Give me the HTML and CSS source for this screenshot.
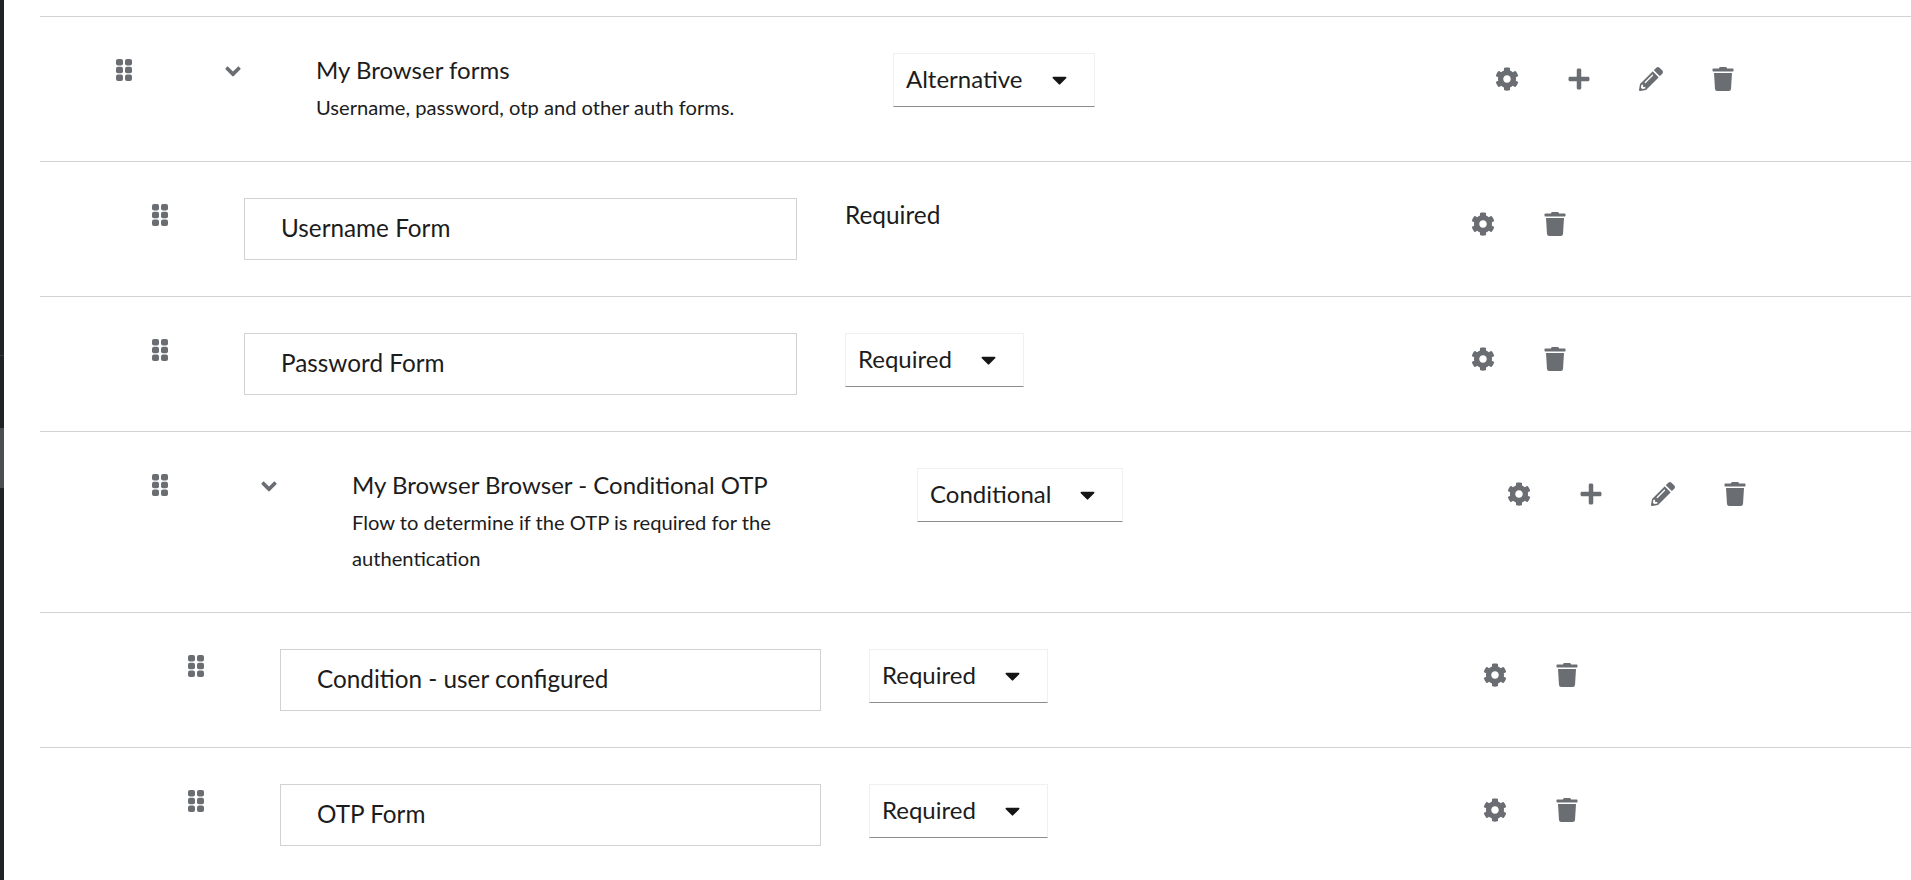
FILE: index.html
```html
<!DOCTYPE html>
<html lang="en">
<head>
    <meta charset="UTF-8">
    <title>My Browser forms</title>
    <link rel="stylesheet" href="styles.css">
</head>
<body>
<svg class="defs" aria-hidden="true">
    <symbol id="i-grip" viewBox="0 0 16 22">
        <rect x="0" y="0" width="7" height="6.4" rx="2"/><rect x="9" y="0" width="7" height="6.4" rx="2"/>
        <rect x="0" y="7.8" width="7" height="6.4" rx="2"/><rect x="9" y="7.8" width="7" height="6.4" rx="2"/>
        <rect x="0" y="15.6" width="7" height="6.4" rx="2"/><rect x="9" y="15.6" width="7" height="6.4" rx="2"/>
    </symbol>
    <symbol id="i-angle" viewBox="0 140 320 232">
        <path d="M143 352.3L7 216.3c-9.4-9.4-9.4-24.6 0-33.9l22.6-22.6c9.4-9.4 24.6-9.4 33.9 0l96.4 96.4 96.4-96.4c9.4-9.4 24.6-9.4 33.9 0l22.6 22.6c9.4 9.4 9.4 24.6 0 33.9l-136 136c-9.2 9.4-24.4 9.4-33.8 0z"/>
    </symbol>
    <symbol id="i-caret" viewBox="0 180 320 185">
        <path d="M31.3 192h257.3c17.8 0 26.7 21.5 14.1 34.1L174.1 354.8c-7.8 7.8-20.5 7.8-28.3 0L17.2 226.1C4.6 213.5 13.5 192 31.3 192z"/>
    </symbol>
    <symbol id="i-cog" viewBox="0 0 512 512">
        <path d="M487.4 315.7l-42.6-24.6c4.3-23.2 4.3-47 0-70.2l42.6-24.6c4.9-2.8 7.1-8.6 5.5-14-11.1-35.6-30-67.8-54.7-94.6-3.8-4.1-10-5.1-14.8-2.3L380.8 110c-17.9-15.4-38.5-27.3-60.8-35.1V25.8c0-5.6-3.9-10.5-9.4-11.7-36.7-8.2-74.3-7.8-109.2 0-5.5 1.2-9.4 6.1-9.4 11.7V75c-22.2 7.9-42.8 19.8-60.8 35.1L88.7 85.5c-4.9-2.8-11-1.9-14.8 2.3-24.7 26.7-43.6 58.9-54.7 94.6-1.7 5.4.6 11.2 5.5 14L67.3 221c-4.3 23.2-4.3 47 0 70.2l-42.6 24.6c-4.9 2.8-7.1 8.6-5.5 14 11.1 35.6 30 67.8 54.7 94.6 3.8 4.1 10 5.1 14.8 2.3l42.6-24.6c17.9 15.4 38.5 27.3 60.8 35.1v49.2c0 5.6 3.9 10.5 9.4 11.7 36.7 8.2 74.3 7.8 109.2 0 5.5-1.2 9.4-6.1 9.4-11.7v-49.2c22.2-7.9 42.8-19.8 60.8-35.1l42.6 24.6c4.9 2.8 11 1.9 14.8-2.3 24.7-26.7 43.6-58.9 54.7-94.6 1.5-5.5-.7-11.3-5.6-14.1zM256 336c-44.1 0-80-35.9-80-80s35.9-80 80-80 80 35.9 80 80-35.9 80-80 80z"/>
    </symbol>
    <symbol id="i-plus" viewBox="0 0 448 512">
        <path d="M416 208H272V64c0-17.67-14.33-32-32-32h-32c-17.67 0-32 14.33-32 32v144H32c-17.67 0-32 14.33-32 32v32c0 17.67 14.33 32 32 32h144v144c0 17.67 14.33 32 32 32h32c17.67 0 32-14.33 32-32V304h144c17.67 0 32-14.33 32-32v-32c0-17.67-14.33-32-32-32z"/>
    </symbol>
    <symbol id="i-pencil" viewBox="0 0 512 512">
        <path d="M497.9 142.1l-46.1 46.1c-4.7 4.7-12.3 4.7-17 0l-111-111c-4.7-4.7-4.7-12.3 0-17l46.1-46.1c18.7-18.7 49.1-18.7 67.9 0l60.1 60.1c18.8 18.7 18.8 49.1 0 67.9zM284.2 99.8L21.6 362.4.4 483.9c-2.9 16.4 11.4 30.6 27.8 27.8l121.5-21.3 262.6-262.6c4.7-4.7 4.7-12.3 0-17l-111-111c-4.8-4.7-12.4-4.7-17.1 0zM124.1 339.9c-5.5-5.5-5.5-14.3 0-19.8l154-154c5.5-5.5 14.3-5.5 19.8 0s5.5 14.3 0 19.8l-154 154c-5.5 5.5-14.3 5.5-19.8 0zM88 424h48v36.3l-64.5 11.3-31.1-31.1L51.7 376H88v48z"/>
    </symbol>
    <symbol id="i-trash" viewBox="0 0 448 512">
        <path d="M432 32H312l-9.4-18.7A24 24 0 0 0 281.1 0H166.8a23.72 23.72 0 0 0-21.4 13.3L136 32H16A16 16 0 0 0 0 48v32a16 16 0 0 0 16 16h416a16 16 0 0 0 16-16V48a16 16 0 0 0-16-16zM53.2 467a48 48 0 0 0 47.9 45h245.8a48 48 0 0 0 47.9-45L416 128H32z"/>
    </symbol>
</svg>

<div class="page">
    <div class="strip">
        <div class="strip-a"></div>
        <div class="strip-line"></div>
        <div class="strip-c"></div>
        <div class="strip-b"></div>
        <div class="strip-d"></div>
    </div>

    <div class="list">
        <div class="row flow depth0">
            <div class="grip"><svg class="ico-grip"><use href="#i-grip"/></svg></div>
            <div class="toggle"><svg class="ico-angle"><use href="#i-angle"/></svg></div>
            <div class="text">
                <h3>My Browser forms</h3>
                <p>Username, password, otp and other auth forms.</p>
            </div>
            <div class="mode">
                <div class="select"><span>Alternative</span><svg class="ico-caret"><use href="#i-caret"/></svg></div>
            </div>
            <div class="actions">
                <svg class="ico"><use href="#i-cog"/></svg>
                <svg class="ico"><use href="#i-plus"/></svg>
                <svg class="ico"><use href="#i-pencil"/></svg>
                <svg class="ico"><use href="#i-trash"/></svg>
            </div>
        </div>

        <div class="row step depth1">
            <div class="grip"><svg class="ico-grip"><use href="#i-grip"/></svg></div>
            <div class="name">Username Form</div>
            <div class="mode"><div class="plain">Required</div></div>
            <div class="actions">
                <svg class="ico"><use href="#i-cog"/></svg>
                <svg class="ico"><use href="#i-trash"/></svg>
            </div>
        </div>

        <div class="row step depth1">
            <div class="grip"><svg class="ico-grip"><use href="#i-grip"/></svg></div>
            <div class="name">Password Form</div>
            <div class="mode">
                <div class="select"><span>Required</span><svg class="ico-caret"><use href="#i-caret"/></svg></div>
            </div>
            <div class="actions">
                <svg class="ico"><use href="#i-cog"/></svg>
                <svg class="ico"><use href="#i-trash"/></svg>
            </div>
        </div>

        <div class="row flow depth1">
            <div class="grip"><svg class="ico-grip"><use href="#i-grip"/></svg></div>
            <div class="toggle"><svg class="ico-angle"><use href="#i-angle"/></svg></div>
            <div class="text">
                <h3>My Browser Browser - Conditional OTP</h3>
                <p>Flow to determine if the OTP is required for the authentication</p>
            </div>
            <div class="mode">
                <div class="select"><span>Conditional</span><svg class="ico-caret"><use href="#i-caret"/></svg></div>
            </div>
            <div class="actions">
                <svg class="ico"><use href="#i-cog"/></svg>
                <svg class="ico"><use href="#i-plus"/></svg>
                <svg class="ico"><use href="#i-pencil"/></svg>
                <svg class="ico"><use href="#i-trash"/></svg>
            </div>
        </div>

        <div class="row step depth2">
            <div class="grip"><svg class="ico-grip"><use href="#i-grip"/></svg></div>
            <div class="name">Condition - user configured</div>
            <div class="mode">
                <div class="select"><span>Required</span><svg class="ico-caret"><use href="#i-caret"/></svg></div>
            </div>
            <div class="actions">
                <svg class="ico"><use href="#i-cog"/></svg>
                <svg class="ico"><use href="#i-trash"/></svg>
            </div>
        </div>

        <div class="row step depth2">
            <div class="grip"><svg class="ico-grip"><use href="#i-grip"/></svg></div>
            <div class="name">OTP Form</div>
            <div class="mode">
                <div class="select"><span>Required</span><svg class="ico-caret"><use href="#i-caret"/></svg></div>
            </div>
            <div class="actions">
                <svg class="ico"><use href="#i-cog"/></svg>
                <svg class="ico"><use href="#i-trash"/></svg>
            </div>
        </div>
    </div>
</div>
</body>
</html>
```

FILE: styles.css
```css
* {
    padding: 0;
    margin: 0;
    box-sizing: border-box;
}

html,
body {
    height: 880px;
    overflow: hidden;
    background: #fff;
}

body {
    font-family: Lato, "Open Sans", sans-serif;
    color: #1c1c1c;
}

.defs {
    display: none;
}

.page {
    display: flex;
    height: 880px;
}

.strip {
    width: 4px;
    display: flex;
    flex-direction: column;
    background: #1f2326;
}

.strip-a {
    height: 355px;
}

.strip-line {
    height: 1px;
    background: #34383a;
}

.strip-c {
    height: 72px;
}

.strip-b {
    height: 60px;
    background: #4b4e50;
}

.strip-d {
    flex-grow: 1;
}

.list {
    flex-grow: 1;
    padding: 16px 0 0 36px;
}

.row {
    display: flex;
    align-items: flex-start;
    border-top: 1px solid #d2d2d2;
    padding: 36px 0;
}

.depth0 {
    padding-left: 76px;
}

.depth1 {
    padding-left: 112px;
}

.depth2 {
    padding-left: 148px;
}

.grip {
    width: 92px;
    flex-shrink: 0;
    padding-top: 6px;
}

.ico-grip {
    display: block;
    width: 16px;
    height: 22px;
    fill: #6a6e73;
}

.toggle {
    width: 108px;
    flex-shrink: 0;
    padding: 13px 0 0 17px;
}

.ico-angle {
    display: block;
    width: 16px;
    height: 11px;
    fill: #6a6e73;
}

.text h3 {
    font-size: 24px;
    font-weight: 400;
    line-height: 34px;
    margin-bottom: 2px;
}

.text p {
    font-size: 20.15px;
    line-height: 36px;
}

.depth0 .text {
    width: 577px;
}

.depth1 .text {
    width: 565px;
}

.depth1 .text p {
    width: 430px;
}

.name {
    height: 62px;
    line-height: 58px;
    font-size: 24.3px;
    padding-left: 36px;
    border: 1px solid #d2d2d2;
    margin-right: 48px;
}

.depth1 .name {
    width: 553px;
}

.depth2 .name {
    width: 541px;
}

.plain {
    font-size: 24.4px;
    line-height: 34px;
}

.select {
    display: inline-flex;
    align-items: center;
    gap: 29px;
    height: 54px;
    padding: 0 27px 0 12px;
    font-size: 24px;
    border: 1px solid #f0f0f0;
    border-bottom-color: #8a8d90;
}

.select span {
    line-height: 48px;
    margin-bottom: 2px;
}

.ico-caret {
    display: block;
    width: 15px;
    height: 9px;
    fill: #151515;
}

.flow.depth0 .mode {
    width: 602px;
}

.step.depth1 .mode {
    width: 626px;
}

.flow.depth1 .mode {
    width: 590px;
}

.step.depth2 .mode {
    width: 614px;
}

.actions {
    display: flex;
    gap: 48px;
    padding-top: 14px;
}

.ico {
    display: block;
    width: 24px;
    height: 24px;
    fill: #6a6e73;
}
```
